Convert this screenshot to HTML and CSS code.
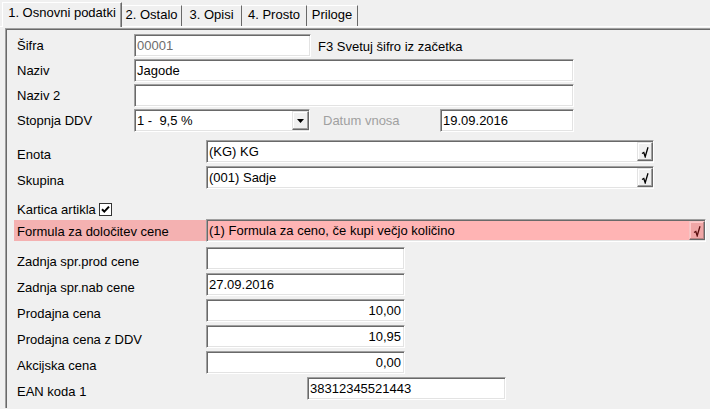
FILE: index.html
```html
<!DOCTYPE html>
<html lang="sl">
<head>
<meta charset="utf-8">
<title>Artikel</title>
<link rel="stylesheet" href="styles.css">
</head>
<body>
  <div class="tabs">
    <div class="tab active t-basic">1. Osnovni podatki</div>
    <div class="tab t-other">2. Ostalo</div>
    <div class="tab t-desc">3. Opisi</div>
    <div class="tab t-free">4. Prosto</div>
    <div class="tab t-att">Priloge</div>
  </div>

  <div class="panel">
    <div class="group top">
      <div class="row">
        <span class="lbl c1">Šifra</span>
        <div class="field w-code readonly">00001</div>
        <span class="hint">F3 Svetuj šifro iz začetka</span>
      </div>
      <div class="row">
        <span class="lbl c1">Naziv</span>
        <div class="field w-name">Jagode</div>
      </div>
      <div class="row">
        <span class="lbl c1">Naziv 2</span>
        <div class="field w-name"></div>
      </div>
      <div class="row">
        <span class="lbl c1">Stopnja DDV</span>
        <div class="field combo w-vat">
          <span class="value">1 -&nbsp; 9,5 %</span>
          <span class="drop"><svg width="7" height="4" viewBox="0 0 7 4"><path d="M0 0h7L3.5 4z" fill="#000"/></svg></span>
        </div>
        <span class="lbl disabled">Datum vnosa</span>
        <div class="field w-date">19.09.2016</div>
      </div>
    </div>

    <div class="group mid">
      <div class="row">
        <span class="lbl c2 low">Enota</span>
        <div class="field combo w-lookup">
          <span class="value">(KG) KG</span>
          <span class="pick"><svg width="8" height="12" viewBox="0 0 8 12"><path d="M1 7.5 2.8 6.5 4.2 10.8 7 1.2" fill="none" stroke="#000" stroke-width="1.3"/></svg></span>
        </div>
      </div>
      <div class="row">
        <span class="lbl c2 low">Skupina</span>
        <div class="field combo w-lookup">
          <span class="value">(001) Sadje</span>
          <span class="pick"><svg width="8" height="12" viewBox="0 0 8 12"><path d="M1 7.5 2.8 6.5 4.2 10.8 7 1.2" fill="none" stroke="#000" stroke-width="1.3"/></svg></span>
        </div>
      </div>
    </div>

    <div class="check-row">
      <span class="lbl">Kartica artikla</span>
      <span class="box"><svg width="9" height="9" viewBox="0 0 9 9"><path d="M1 4.2 3.3 6.6 8 1.6" fill="none" stroke="#000" stroke-width="2"/></svg></span>
    </div>

    <div class="group bottom">
      <div class="row alert">
        <span class="lbl c2 mark">Formula za določitev cene</span>
        <div class="field combo w-formula">
          <span class="value">(1) Formula za ceno, če kupi večjo količino</span>
          <span class="pick"><svg width="8" height="12" viewBox="0 0 8 12"><path d="M1 7.5 2.8 6.5 4.2 10.8 7 1.2" fill="none" stroke="#5a0f0f" stroke-width="1.3"/></svg></span>
        </div>
      </div>
      <div class="row">
        <span class="lbl c2 low">Zadnja spr.prod cene</span>
        <div class="field w-short"></div>
      </div>
      <div class="row">
        <span class="lbl c2 low">Zadnja spr.nab cene</span>
        <div class="field w-short">27.09.2016</div>
      </div>
      <div class="row">
        <span class="lbl c2 low">Prodajna cena</span>
        <div class="field w-short num">10,00</div>
      </div>
      <div class="row">
        <span class="lbl c2 low">Prodajna cena z DDV</span>
        <div class="field w-short num">10,95</div>
      </div>
      <div class="row">
        <span class="lbl c2 low">Akcijska cena</span>
        <div class="field w-short num">0,00</div>
      </div>
      <div class="row">
        <span class="lbl c3 low">EAN koda 1</span>
        <div class="field w-short">38312345521443</div>
      </div>
    </div>
  </div>
</body>
</html>
```

FILE: styles.css
```css
html, body {
  margin: 0;
  padding: 0;
}

body {
  width: 710px;
  height: 409px;
  overflow: hidden;
  background: #f0f0f0;
  color: #000;
  font: 13px/15px "Liberation Sans", Arial, sans-serif;
}

/* ---- tab strip ---- */
.tabs {
  display: flex;
  align-items: flex-end;
  height: 26px;
  padding-left: 2px;
  border-bottom: 1px solid #fff;
}

.tab {
  height: 21px;
  padding-top: 1px;
  border-top: 1px solid #fff;
  border-right: 1px solid #696969;
  box-sizing: border-box;
  text-align: center;
  white-space: nowrap;
}

.tab.active {
  height: 25px;
  margin-bottom: -1px;
  padding-top: 2px;
  border-left: 1px solid #fff;
  background: #f0f0f0;
  box-shadow: inset -1px 0 0 #a0a0a0;
}

.t-basic { width: 120px; }
.t-other { width: 60px; }
.t-desc { width: 60px; }
.t-free { width: 65px; }
.t-att { width: 51px; }

/* ---- sunken page frame ---- */
.panel {
  margin: 1px 0 0 5px;
  height: 380px;
  padding: 5px 0 0 8px;
  border-top: 1px solid #a0a0a0;
  border-left: 1px solid #a0a0a0;
  box-shadow: inset 1px 1px 0 #696969;
  box-sizing: border-box;
}

.group {
  display: flex;
  flex-direction: column;
}

.group.top { gap: 2px; }
.group.mid { gap: 3px; margin-top: 8px; }
.group.bottom { gap: 3px; }

.row {
  display: flex;
  align-items: center;
  height: 23px;
}

.group.bottom .row:first-child { margin-bottom: 2px; }

/* ---- labels ---- */
.lbl {
  padding-left: 3px;
  white-space: nowrap;
  box-sizing: border-box;
}

.lbl.c1 { width: 120px; }
.lbl.c2 { width: 192px; }
.lbl.c3 { width: 293px; }
.lbl.low { padding-top: 5px; }

.lbl.mark {
  align-self: flex-start;
  height: 21px;
  margin-top: 1px;
  padding-top: 4px;
  background: #f4b1b1;
}

.lbl.disabled {
  color: #a0a0a0;
  margin-left: 10px;
  width: 120px;
}

.hint {
  margin-left: 7px;
  padding-top: 1px;
}

/* ---- edit boxes ---- */
.field {
  display: flex;
  align-items: center;
  height: 23px;
  padding: 0 3px 0 2px;
  box-sizing: border-box;
  background: #fff;
  border: 1px solid;
  border-color: #a0a0a0 #fff #fff #a0a0a0;
  box-shadow: inset 1px 1px 0 #696969, inset -1px -1px 0 #e3e3e3;
  white-space: nowrap;
}

.field.readonly { color: #6d6d6d; }
.field.num { justify-content: flex-end; }

.w-code { width: 177px; }
.w-name { width: 440px; }
.w-vat { width: 176px; }
.w-date { width: 134px; }
.w-lookup { width: 448px; }
.w-formula { width: 500px; }
.w-short { width: 199px; }

.combo { padding-right: 0; }
.combo .value { flex: 1; }

.drop,
.pick {
  display: flex;
  align-items: center;
  justify-content: center;
  height: 19px;
  box-sizing: border-box;
  background: #f0f0f0;
  border: 1px solid;
  border-color: #e3e3e3 #696969 #696969 #e3e3e3;
  box-shadow: inset -1px -1px 0 #a0a0a0, inset 1px 1px 0 #fff;
}

.drop { width: 17px; }
.pick { width: 16px; }

/* highlighted row */
.alert .field { background: #ffb4b4; }
.alert .pick {
  background: #f0a6a6;
  border-color: #f6c4c4 #696969 #696969 #f6c4c4;
  box-shadow: inset -1px -1px 0 #b88484, inset 1px 1px 0 #ffc8c8;
}

/* ---- checkbox line ---- */
.check-row {
  display: flex;
  align-items: center;
  height: 16px;
  margin: 12px 0 2px;
}

.check-row .lbl { padding-top: 1px; }

.box {
  display: flex;
  align-items: center;
  justify-content: center;
  width: 13px;
  height: 13px;
  margin-left: 3px;
  box-sizing: border-box;
  background: #fff;
  border: 1px solid #333;
}
```
